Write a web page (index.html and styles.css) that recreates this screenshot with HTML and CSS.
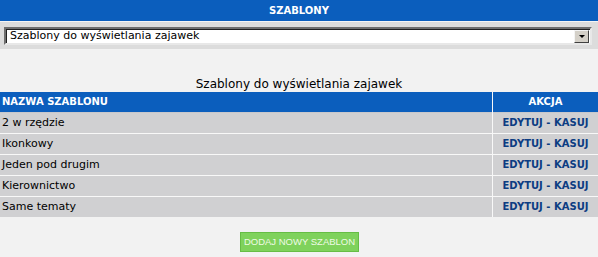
FILE: index.html
```html
<!DOCTYPE html>
<html lang="pl">
<head>
<meta charset="utf-8">
<title>Szablony</title>
<link rel="stylesheet" href="styles.css">
</head>
<body>
<div class="topbar">SZABLONY</div>
<div class="selectbar">
  <div class="select">
    <span class="select-text">Szablony do wyświetlania zajawek</span>
    <span class="select-btn"><span class="arrow"></span></span>
  </div>
</div>
<div class="title">Szablony do wyświetlania zajawek</div>
<table class="grid">
  <thead>
    <tr><th class="c-name">NAZWA SZABLONU</th><th class="c-act">AKCJA</th></tr>
  </thead>
  <tbody>
    <tr><td class="c-name">2 w rzędzie</td><td class="c-act"><a>EDYTUJ</a> - <a>KASUJ</a></td></tr>
    <tr><td class="c-name">Ikonkowy</td><td class="c-act"><a>EDYTUJ</a> - <a>KASUJ</a></td></tr>
    <tr><td class="c-name">Jeden pod drugim</td><td class="c-act"><a>EDYTUJ</a> - <a>KASUJ</a></td></tr>
    <tr><td class="c-name">Kierownictwo</td><td class="c-act"><a>EDYTUJ</a> - <a>KASUJ</a></td></tr>
    <tr><td class="c-name">Same tematy</td><td class="c-act"><a>EDYTUJ</a> - <a>KASUJ</a></td></tr>
  </tbody>
</table>
<div class="actions">
  <button class="add">DODAJ NOWY SZABLON</button>
</div>
</body>
</html>
```
FILE: styles.css
```css
html, body {
  margin: 0;
  padding: 0;
  background: #f2f2f2;
  font-family: "DejaVu Sans", Verdana, sans-serif;
}
.topbar {
  background: #0b5ebd;
  color: #fff;
  font-weight: bold;
  font-size: 10px;
  height: 21px;
  line-height: 22px;
  text-align: center;
  border-bottom: 1px solid #f4f4f4;
}
.selectbar {
  background: #dcdcdc;
  padding: 5px 6px 4px 4px;
}
.select {
  display: flex;
  align-items: center;
  height: 12px;
  background: #fff;
  border-style: solid;
  border-width: 2px;
  border-color: #6e6e6e #e8e8e8 #e8e8e8 #6e6e6e;
  box-shadow: inset 1px 1px 0 #202020;
  padding: 1px 1px 1px 4px;
}
.select-text {
  flex: 1;
  font-size: 11px;
  line-height: 12px;
  color: #000;
}
.select-btn {
  width: 13px;
  height: 11px;
  background: #d4d0c8;
  border: 1px solid;
  border-color: #f4f4f4 #404040 #404040 #f4f4f4;
  display: flex;
  align-items: center;
  justify-content: center;
}
.arrow {
  width: 0;
  height: 0;
  border-left: 3px solid transparent;
  border-right: 3px solid transparent;
  border-top: 3px solid #000;
  margin-top: 1px;
}
.title {
  text-align: center;
  font-size: 12px;
  line-height: 16px;
  color: #000;
  padding-top: 27px;
}
.grid {
  width: 100%;
  border-collapse: collapse;
  border-spacing: 0;
  margin-top: 0;
}
.grid th {
  background: #0b5ebd;
  color: #fff;
  font-size: 10px;
  font-weight: bold;
  height: 20px;
  padding: 0 2px;
  line-height: 20px;
}
.grid th.c-name { text-align: left; }
.grid td {
  background: #d0d0d2;
  height: 20px;
  padding: 0 2px;
  line-height: 20px;
}
.grid tbody tr + tr td { border-top: 1px solid #f8f8f8; }
.grid tbody tr:first-child td { border-top: 1px solid #c8c8cc; }
.c-name {
  width: 488px;
  font-size: 11px;
  color: #000;
  text-align: left;
}
.c-act {
  border-left: 1px solid #f8f8f8;
  text-align: center;
  font-size: 10px;
  font-weight: bold;
  color: #0c3c82;
}
.c-act a { color: #0c3c82; }
.actions {
  display: flex;
  justify-content: center;
  padding-top: 15px;
}
.add {
  width: 119px;
  height: 20px;
  margin-left: 1px;
  padding: 0;
  background: #7fd25c;
  border: 1px solid #66bd45;
  color: #effbe6;
  font-family: "Liberation Sans", Arial, sans-serif;
  font-size: 9.5px;
  line-height: 18px;
}
```
